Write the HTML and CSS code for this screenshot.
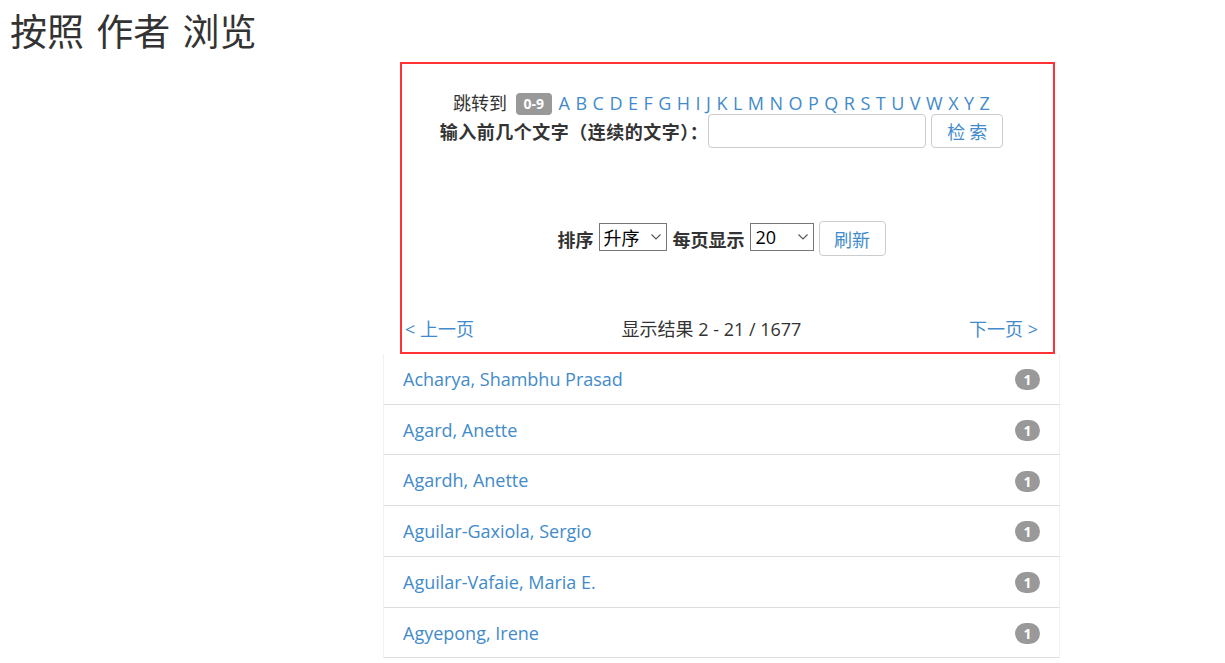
FILE: index.html
```html
<!DOCTYPE html>
<html lang="zh">
<head>
<meta charset="utf-8">
<title>按照 作者 浏览</title>
<link rel="stylesheet" href="styles.css">
</head>
<body>
<h1 class="page-title">按照 作者 浏览</h1>
<div class="browse">
  <form class="controls">
    <div class="jump-row">
      <span class="jump-label">跳转到</span>
      <span class="tag">0-9</span>
      <a href="#">A</a> <a href="#">B</a> <a href="#">C</a> <a href="#">D</a> <a href="#">E</a> <a href="#">F</a> <a href="#">G</a> <a href="#">H</a> <a href="#">I</a> <a href="#">J</a> <a href="#">K</a> <a href="#">L</a> <a href="#">M</a> <a href="#">N</a> <a href="#">O</a> <a href="#">P</a> <a href="#">Q</a> <a href="#">R</a> <a href="#">S</a> <a href="#">T</a> <a href="#">U</a> <a href="#">V</a> <a href="#">W</a> <a href="#">X</a> <a href="#">Y</a> <a href="#">Z</a>
    </div>
    <div class="search-row">
      <label class="bold search-label">输入前几个文字（连续的文字）：</label>
      <input class="text-input" type="text">
      <button class="btn btn-search" type="button">检 索</button>
    </div>
    <div class="sort-row">
      <label class="bold">排序</label>
      <span class="sel-wrap sel-order">
        <select class="sel"><option>升序</option></select>
        <svg class="chev" width="10" height="6" viewBox="0 0 10 6"><path d="M0.5 0.5 L5 5 L9.5 0.5" fill="none" stroke="#555" stroke-width="1.1"/></svg>
      </span>
      <label class="bold">每页显示</label>
      <span class="sel-wrap sel-rpp">
        <select class="sel sel-num"><option>20</option></select>
        <svg class="chev" width="10" height="6" viewBox="0 0 10 6"><path d="M0.5 0.5 L5 5 L9.5 0.5" fill="none" stroke="#555" stroke-width="1.1"/></svg>
      </span>
      <button class="btn btn-refresh" type="button">刷新</button>
    </div>
    <div class="pager">
      <a href="#">&lt; 上一页</a>
      <span class="result">显示结果 2 - 21 / 1677</span>
      <a href="#">下一页 &gt;</a>
    </div>
  </form>
  <ul class="list">
    <li class="item"><a href="#">Acharya, Shambhu Prasad</a><span class="badge">1</span></li>
    <li class="item"><a href="#">Agard, Anette</a><span class="badge">1</span></li>
    <li class="item"><a href="#">Agardh, Anette</a><span class="badge">1</span></li>
    <li class="item"><a href="#">Aguilar-Gaxiola, Sergio</a><span class="badge">1</span></li>
    <li class="item"><a href="#">Aguilar-Vafaie, Maria E.</a><span class="badge">1</span></li>
    <li class="item"><a href="#">Agyepong, Irene</a><span class="badge">1</span></li>
  </ul>
</div>
</body>
</html>
```
FILE: styles.css
```css
* { box-sizing: border-box; }
html, body { margin: 0; padding: 0; background: #fff; }
body {
  font-family: "Open Sans", "Noto Sans CJK SC", sans-serif;
  font-size: 18px;
  color: #333;
}
a { color: #428bca; text-decoration: none; }
.page-title {
  margin: 10px 10px 12px;
  font-family: "Noto Sans CJK SC", sans-serif;
  font-weight: 400;
  font-size: 37px;
  line-height: 40px;
  word-spacing: 4px;
  color: #333;
}
.browse {
  margin-left: 383px;
  width: 677px;
}
.controls {
  margin: 0 5px 0 17px;
  border: 2px solid #f33;
  padding: 0 15px 11px 3px;
  display: flex;
  flex-direction: column;
  align-items: center;
}
.jump-row {
  margin-top: 26px;
  height: 24px;
  line-height: 24px;
  white-space: nowrap;
  word-spacing: 0.8px;
}
.jump-label { font-family: "Noto Sans CJK SC", sans-serif; }
.tag {
  display: inline-block;
  background: #999;
  color: #fff;
  font-weight: 700;
  font-size: 14px;
  line-height: 22px;
  padding: 0 8px;
  border-radius: 4px;
  vertical-align: 1px;
  margin: 0 1px 0 3px;
  word-spacing: 0;
}
.search-row, .sort-row {
  display: flex;
  align-items: center;
  white-space: nowrap;
}
.search-row { height: 34px; }
.bold { font-weight: 700; font-family: "Noto Sans CJK SC", sans-serif; }
.search-label { letter-spacing: 0.5px; }
.text-input {
  width: 218px;
  height: 34px;
  margin-left: 0;
  border: 1px solid #ccc;
  border-radius: 4px;
  font-size: 18px;
}
.btn {
  background: #fff;
  border: 1px solid #ccc;
  border-radius: 4px;
  color: #428bca;
  font-family: "Noto Sans CJK SC", sans-serif;
  font-size: 18px;
  padding: 0;
}
.btn-search { width: 72px; height: 34px; margin-left: 5px; }
.sort-row { margin-top: 73px; height: 35px; }
.sel-wrap {
  position: relative;
  display: inline-block;
  height: 28px;
  margin-bottom: 4px;
}
.sel {
  -webkit-appearance: none;
  appearance: none;
  width: 100%;
  height: 28px;
  border: 1px solid #767676;
  border-radius: 0;
  background: #fff;
  color: #000;
  font-family: "Noto Sans CJK SC", sans-serif;
  font-size: 18px;
  line-height: 26px;
  padding: 0 0 0 4px;
  outline: none;
}
.sel-num { font-family: "Open Sans", sans-serif; padding-left: 5px; }
.chev {
  position: absolute;
  right: 6px;
  top: 11px;
  pointer-events: none;
}
.sel-order { width: 68px; margin-left: 5px; margin-right: 6px; }
.sel-rpp { width: 64px; margin-left: 5px; margin-right: 5px; }
.btn-refresh { width: 67px; height: 35px; }
.pager {
  align-self: stretch;
  margin-top: 61px;
  height: 24px;
  line-height: 24px;
  display: flex;
  justify-content: space-between;
  white-space: nowrap;
}
.result { margin-right: 20px; }
.list {
  list-style: none;
  margin: 0;
  padding: 0;
}
.item {
  display: flex;
  justify-content: space-between;
  align-items: center;
  padding: 13px 19px 11px;
  line-height: 25.7px;
  border-left: 1px solid #f2f2f2;
  border-right: 1px solid #f2f2f2;
  border-bottom: 1px solid #ddd;
}
.badge {
  display: inline-block;
  background: #999;
  color: #fff;
  font-weight: 700;
  font-size: 14px;
  line-height: 21px;
  min-width: 25px;
  text-align: center;
  border-radius: 11px;
}
```
